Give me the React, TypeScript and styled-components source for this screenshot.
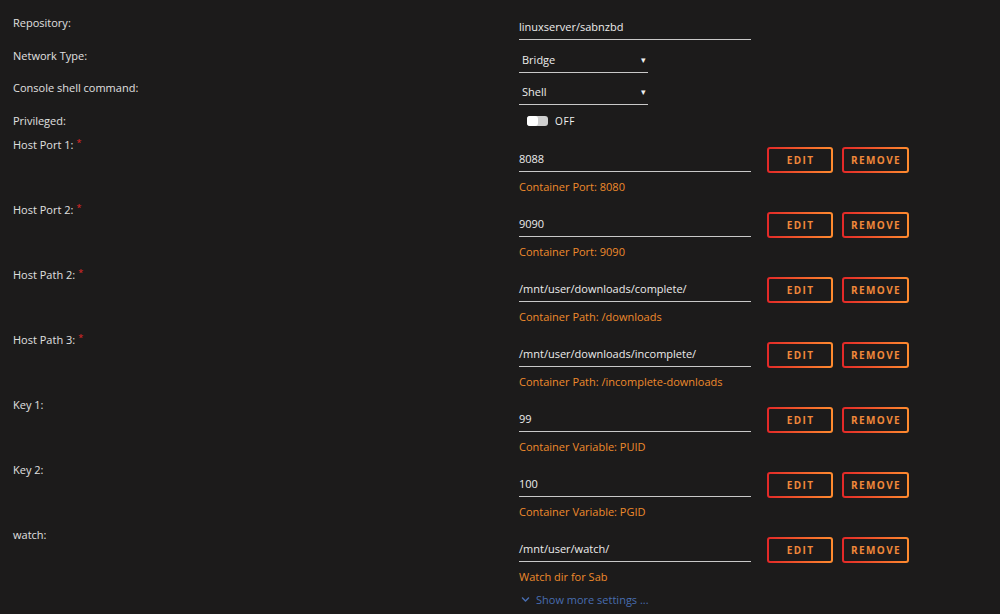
import React from "react";
import styled, { createGlobalStyle } from "styled-components";
import { FaChevronDown } from "react-icons/fa";

const Global = createGlobalStyle`
  html, body { margin: 0; padding: 0; background: #1c1b1b; }
  * { box-sizing: border-box; }
`;

const Page = styled.div`
  background: #1c1b1b;
  min-height: 614px;
  padding-top: 16px;
  font-family: "Open Sans", "Noto Sans", sans-serif;
  color: #e2e2e2;
  overflow: hidden;
`;

const Row = styled.div<{ $h: number }>`
  display: grid;
  grid-template-columns: 519px 1fr;
  height: ${(p) => p.$h}px;
`;

const Label = styled.div`
  padding-left: 13px;
  font-size: 11px;
  line-height: 14px;
  color: #e0e0e0;
`;

const Req = styled.sup`
  color: #e22828;
  font-size: 9px;
  line-height: 0;
  margin-left: 3px;
  position: relative;
  top: 2px;
`;

const Content = styled.div<{ $pt?: number }>`
  padding-top: ${(p) => p.$pt ?? 0}px;
`;

const InputLine = styled.div<{ $w: number }>`
  width: ${(p) => p.$w}px;
  height: 24px;
  border-bottom: 1px solid #c9c9c9;
  font-size: 11px;
  line-height: 21px;
  color: #ececec;
  white-space: nowrap;
`;

const Select = styled.div`
  width: 129px;
  height: 24px;
  border-bottom: 1px solid #c9c9c9;
  font-size: 11px;
  line-height: 22px;
  color: #ececec;
  padding-left: 3px;
  display: flex;
  justify-content: space-between;
  padding-right: 2px;
`;

const Arrow = styled.span`
  font-size: 9px;
  color: #f0f0f0;
`;

const FieldRow = styled.div`
  display: flex;
  align-items: center;
`;

const Buttons = styled.div`
  display: flex;
  gap: 9px;
  margin-left: 16px;
`;

const Btn = styled.div<{ $w: number }>`
  width: ${(p) => p.$w}px;
  height: 26px;
  border: 2px solid transparent;
  border-radius: 3px;
  background: linear-gradient(#1c1b1b, #1c1b1b) padding-box,
    linear-gradient(90deg, #e22828 0%, #ff8c2f 100%) border-box;
  display: flex;
  align-items: center;
  justify-content: center;
  font-family: "Open Sans", sans-serif;
  font-weight: 700;
  font-size: 10px;
  letter-spacing: 1.4px;
  color: #f0883a;
  padding-left: 1px;
`;

const Desc = styled.div`
  margin-top: 7px;
  font-size: 11px;
  line-height: 14px;
  color: #ee8a2c;
`;

const ToggleWrap = styled.div`
  display: flex;
  align-items: center;
  height: 14px;
  padding-left: 8px;
  gap: 7px;
`;

const Toggle = styled.div`
  width: 21px;
  height: 10px;
  border-radius: 3px;
  background: #cfcfcf;
  display: flex;
`;

const Knob = styled.div`
  width: 11px;
  height: 10px;
  border-radius: 3px;
  background: #ffffff;
`;

const ToggleText = styled.span`
  font-size: 10px;
  letter-spacing: 0.6px;
  color: #f0f0f0;
`;

const More = styled.div`
  padding-left: 521px;
  height: 14px;
  display: flex;
  align-items: center;
  gap: 6px;
  font-size: 11px;
  color: #486db0;
  margin-top: -1px;
`;

type Item = {
  label: string;
  req?: boolean;
  value: string;
  desc: string;
};

const items: Item[] = [
  { label: "Host Port 1:", req: true, value: "8088", desc: "Container Port: 8080" },
  { label: "Host Port 2:", req: true, value: "9090", desc: "Container Port: 9090" },
  { label: "Host Path 2:", req: true, value: "/mnt/user/downloads/complete/", desc: "Container Path: /downloads" },
  { label: "Host Path 3:", req: true, value: "/mnt/user/downloads/incomplete/", desc: "Container Path: /incomplete-downloads" },
  { label: "Key 1:", value: "99", desc: "Container Variable: PUID" },
  { label: "Key 2:", value: "100", desc: "Container Variable: PGID" },
  { label: "watch:", value: "/mnt/user/watch/", desc: "Watch dir for Sab" },
];

export default function App() {
  return (
    <>
      <Global />
      <Page>
        <Row $h={33}>
          <Label>Repository:</Label>
          <Content>
            <InputLine $w={232}>linuxserver/sabnzbd</InputLine>
          </Content>
        </Row>
        <Row $h={32}>
          <Label>Network Type:</Label>
          <Content>
            <Select>
              <span>Bridge</span>
              <Arrow>▾</Arrow>
            </Select>
          </Content>
        </Row>
        <Row $h={33}>
          <Label>Console shell command:</Label>
          <Content>
            <Select>
              <span>Shell</span>
              <Arrow>▾</Arrow>
            </Select>
          </Content>
        </Row>
        <Row $h={24}>
          <Label>Privileged:</Label>
          <ToggleWrap>
            <Toggle>
              <Knob />
            </Toggle>
            <ToggleText>OFF</ToggleText>
          </ToggleWrap>
        </Row>
        {items.map((it) => (
          <Row $h={65} key={it.label}>
            <Label>
              {it.label}
              {it.req && <Req>*</Req>}
            </Label>
            <Content $pt={9}>
              <FieldRow>
                <InputLine $w={232}>{it.value}</InputLine>
                <Buttons>
                  <Btn $w={66}>EDIT</Btn>
                  <Btn $w={67}>REMOVE</Btn>
                </Buttons>
              </FieldRow>
              <Desc>{it.desc}</Desc>
            </Content>
          </Row>
        ))}
        <More>
          <FaChevronDown size={9} />
          <span>Show more settings ...</span>
        </More>
      </Page>
    </>
  );
}
